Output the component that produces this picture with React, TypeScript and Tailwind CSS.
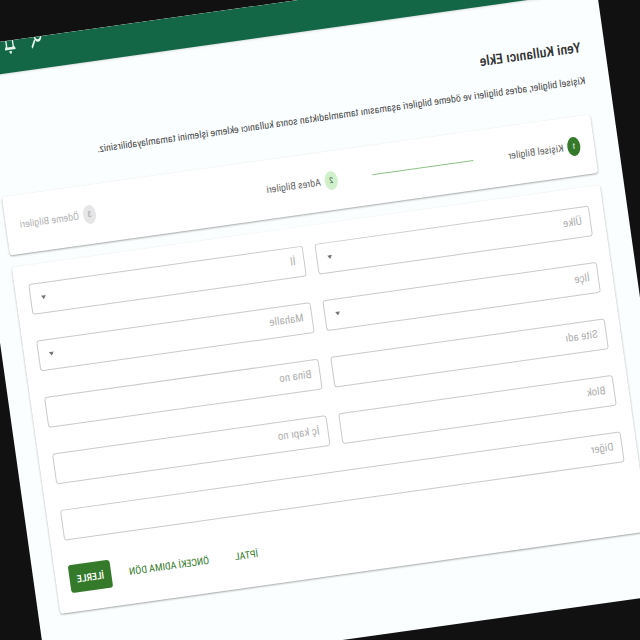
import React from "react";

type FieldProps = { id: string; label: string; wide?: boolean; options?: boolean };

const fields: FieldProps[] = [
  { id: "ulke", label: "Ülke", options: true },
  { id: "il", label: "İl", options: true },
  { id: "ilce", label: "İlçe", options: true },
  { id: "mahalle", label: "Mahalle", options: true },
  { id: "site", label: "Site adı" },
  { id: "bina", label: "Bina no" },
  { id: "blok", label: "Blok" },
  { id: "kapi", label: "İç kapı no" },
  { id: "diger", label: "Diğer", wide: true },
];

function Field({ id, label, wide, options }: FieldProps) {
  const box =
    "block h-[31px] w-full appearance-none rounded-[3px] border border-[#cacaca] bg-transparent px-2 text-[11px] text-[#333] outline-none";
  return (
    <div className={wide ? "relative col-span-2" : "relative"}>
      {options ? (
        <select id={id} className={box} defaultValue="">
          <option value=""></option>
        </select>
      ) : (
        <input id={id} type="text" className={box} />
      )}
      <label
        htmlFor={id}
        className="pointer-events-none absolute inset-y-0 left-[9px] flex items-center text-[11px] text-[#b0b0b0]"
      >
        {label}
      </label>
      {options && (
        <svg viewBox="0 0 5 4" className="pointer-events-none absolute top-[13px] right-[11px] h-1 w-[5px] fill-[#757575]">
          <path d="M0 0h5L2.5 4z" />
        </svg>
      )}
    </div>
  );
}

function Step({ n, label, badge, text }: { n: number; label: string; badge: string; text: string }) {
  return (
    <li className="flex items-center gap-1">
      <span className={`flex h-[19px] w-[13px] items-center justify-center rounded-[50%] text-[8px] leading-3 ${badge}`}>
        {n}
      </span>
      <span className={`text-[10px] leading-3 whitespace-nowrap ${text}`}>{label}</span>
    </li>
  );
}

export default function App() {
  return (
    <div className="flex min-h-screen overflow-hidden bg-[#111111] font-['Roboto_Condensed','Liberation_Sans_Narrow',Roboto,sans-serif]">
      <div className="min-h-screen w-full -rotate-8 -scale-x-100 overflow-hidden bg-[#fafeff]">
        <header className="h-8 overflow-hidden bg-[#146746] shadow-sm">
          <div className="-mt-8 flex h-16 items-center justify-end gap-[11px] pr-[43px] text-[#e6f4ec]">
            <button type="button" aria-label="Ara">
              <svg viewBox="0 0 24 24" preserveAspectRatio="none" className="h-8 w-4 fill-current">
                <path d="M15.5 14h-.79l-.28-.27A6.471 6.471 0 0 0 16 9.5 6.5 6.5 0 1 0 9.5 16c1.61 0 3.09-.59 4.23-1.57l.27.28v.79l5 4.99L20.49 19l-4.99-5zm-6 0C7.01 14 5 11.99 5 9.5S7.01 5 9.5 5 14 7.01 14 9.5 11.99 14 9.5 14z" />
              </svg>
            </button>
            <button type="button" aria-label="Bildirimler">
              <svg viewBox="0 0 24 24" preserveAspectRatio="none" className="h-8 w-4 fill-current">
                <path d="M12 22c1.1 0 2-.9 2-2h-4c0 1.1.9 2 2 2zm6-6v-5c0-3.07-1.63-5.64-4.5-6.32V4c0-.83-.67-1.5-1.5-1.5s-1.5.67-1.5 1.5v.68C7.64 5.36 6 7.92 6 11v5l-2 2v1h16v-1l-2-2zm-2 1H8v-6c0-2.48 1.51-4.5 4-4.5s4 2.02 4 4.5v6z" />
              </svg>
            </button>
          </div>
        </header>

        <main className="pt-11 pr-[22px] pl-6">
          <h1 className="text-[14px] leading-5 font-medium text-[#333]">Yeni Kullanıcı Ekle</h1>
          <p className="mt-4 text-[10px] leading-4 whitespace-nowrap text-[#4a4a4a]">
            Kişisel bilgiler, adres bilgileri ve ödeme bilgileri aşamasını tamamladıktan sonra kullanıcı ekleme işlemini
            tamamlayabilirsiniz.
          </p>

          <ol className="mt-[26px] flex h-[59px] items-center gap-[35px] rounded-[3px] bg-white px-[14px] shadow-[0_1px_2px_rgba(0,0,0,0.35)]">
            <Step n={1} label="Kişisel Bilgiler" badge="bg-[#357a2b] text-white" text="text-[#666]" />
            <li aria-hidden="true" className="h-px flex-1 bg-[#8fc287]" />
            <Step n={2} label="Adres Bilgileri" badge="bg-[#d0f0cc] text-[#3c5c3c]" text="text-[#666]" />
            <li aria-hidden="true" className="h-px flex-1" />
            <Step n={3} label="Ödeme Bilgileri" badge="bg-[#e6e6e6] text-[#a0a0a0]" text="text-[#b4b4b4]" />
          </ol>

          <form className="mt-3 rounded-[3px] bg-white px-[14px] pt-[19px] pb-[19px] shadow-[0_1px_2px_rgba(0,0,0,0.35)]">
            <div className="grid grid-cols-2 gap-x-3 gap-y-[26px]">
              {fields.map((f) => (
                <Field key={f.id} {...f} />
              ))}
            </div>
            <div className="mt-[25px] flex items-center justify-end gap-[18px] text-[10px] text-[#357a2b]">
              <button type="button" className="mr-2">İPTAL</button>
              <button type="button">ÖNCEKİ ADIMA DÖN</button>
              <button type="button" className="h-7 w-[42px] rounded-[3px] bg-[#357a2b] font-medium text-white">
                İLERLE
              </button>
            </div>
          </form>
        </main>
      </div>
    </div>
  );
}
